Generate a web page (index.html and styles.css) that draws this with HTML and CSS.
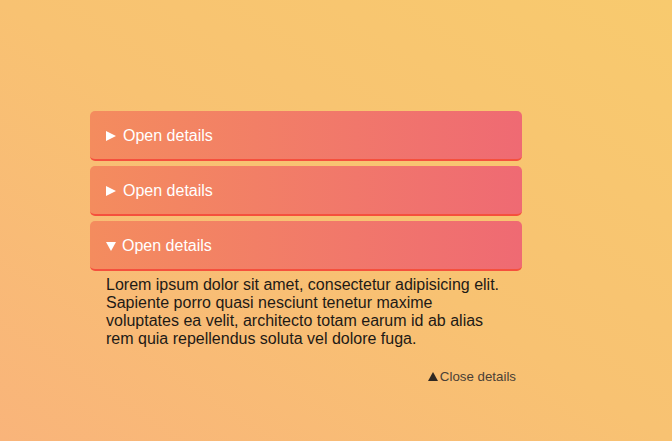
FILE: index.html
```html
<!DOCTYPE html>
<html lang="en">
<head>
<meta charset="utf-8">
<title>Details</title>
<link rel="stylesheet" href="styles.css">
</head>
<body>
<main class="wrap">
  <details class="item">
    <summary class="head"><span class="tri"></span>Open details</summary>
  </details>
  <details class="item">
    <summary class="head"><span class="tri"></span>Open details</summary>
  </details>
  <details class="item" open>
    <summary class="head"><span class="tri"></span>Open details</summary>
    <div class="body">
      <p class="text">Lorem ipsum dolor sit amet, consectetur adipisicing elit. Sapiente porro quasi nesciunt tenetur maxime voluptates ea velit, architecto totam earum id ab alias rem quia repellendus soluta vel dolore fuga.</p>
      <div class="close"><span class="up"></span>Close details</div>
    </div>
  </details>
</main>
</body>
</html>
```

FILE: styles.css
```css
html, body {
  margin: 0;
  height: 100%;
}
body {
  font-family: "Liberation Sans", Arial, sans-serif;
  background: linear-gradient(to top right, #f9b47a 0%, #f8c272 50%, #f8ca6e 100%);
  min-height: 441px;
}
.wrap {
  width: 432px;
  padding: 111px 0 0 90px;
  display: flex;
  flex-direction: column;
  gap: 5px;
}
.item {
  margin: 0;
}
.head {
  list-style: none;
  display: flex;
  align-items: center;
  box-sizing: border-box;
  height: 50px;
  padding: 2px 16px 0;
  border-radius: 5px;
  border-bottom: 2px solid #f5503d;
  background: linear-gradient(to right, #f48c5e, #ef6a73);
  color: #fff;
  font-size: 16px;
  cursor: pointer;
}
.head::-webkit-details-marker { display: none; }
.tri {
  width: 0;
  height: 0;
  border-top: 5.5px solid transparent;
  border-bottom: 5.5px solid transparent;
  border-left: 10px solid #fff;
  margin-right: 7px;
}
.item[open] .tri {
  border-left: 5.5px solid transparent;
  border-right: 5.5px solid transparent;
  border-top: 9.5px solid #fff;
  border-bottom: 0;
  margin-right: 6px;
  margin-top: 1px;
}
.body {
  padding: 5px 16px 0;
}
.text {
  margin: 0;
  font-size: 16px;
  line-height: 18px;
  color: #1e1a16;
}
.close {
  display: flex;
  justify-content: flex-end;
  align-items: center;
  margin-top: 21px;
  margin-right: -10px;
  font-size: 13.3px;
  color: #4a3f36;
}
.up {
  width: 0;
  height: 0;
  border-left: 5px solid transparent;
  border-right: 5px solid transparent;
  border-bottom: 9px solid #2f2822;
  margin-right: 2px;
  margin-top: -1px;
}
```
